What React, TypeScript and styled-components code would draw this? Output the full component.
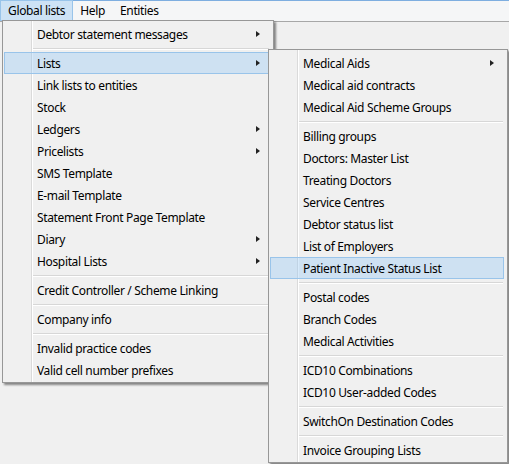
import React from "react";
import styled, { createGlobalStyle } from "styled-components";

type Entry = { label?: string; sub?: boolean; active?: boolean; sep?: boolean };

const SEP: Entry = { sep: true };

const GLOBAL_LISTS: Entry[] = [
  { label: "Debtor statement messages", sub: true },
  SEP,
  { label: "Lists", sub: true, active: true },
  { label: "Link lists to entities" },
  { label: "Stock" },
  { label: "Ledgers", sub: true },
  { label: "Pricelists", sub: true },
  { label: "SMS Template" },
  { label: "E-mail Template" },
  { label: "Statement Front Page Template" },
  { label: "Diary", sub: true },
  { label: "Hospital Lists", sub: true },
  SEP,
  { label: "Credit Controller / Scheme Linking" },
  SEP,
  { label: "Company info" },
  SEP,
  { label: "Invalid practice codes" },
  { label: "Valid cell number prefixes" },
];

const LISTS: Entry[] = [
  { label: "Medical Aids", sub: true },
  { label: "Medical aid contracts" },
  { label: "Medical Aid Scheme Groups" },
  SEP,
  { label: "Billing groups" },
  { label: "Doctors: Master List" },
  { label: "Treating Doctors" },
  { label: "Service Centres" },
  { label: "Debtor status list" },
  { label: "List of Employers" },
  { label: "Patient Inactive Status List", active: true },
  SEP,
  { label: "Postal codes" },
  { label: "Branch Codes" },
  { label: "Medical Activities" },
  SEP,
  { label: "ICD10 Combinations" },
  { label: "ICD10 User-added Codes" },
  SEP,
  { label: "SwitchOn Destination Codes" },
  SEP,
  { label: "Invoice Grouping Lists" },
];

const GlobalStyle = createGlobalStyle`
  html, body {
    margin: 0;
    padding: 0;
    background: #f0f0f0;
  }
  body {
    font-family: "Noto Sans", "Open Sans", sans-serif;
    font-size: 12px;
    letter-spacing: -0.35px;
    color: #000;
  }
`;

const Window = styled.div`
  position: relative;
  width: 509px;
  height: 464px;
  overflow: hidden;
  background: #f0f0f0;
`;

const MenuBar = styled.div`
  display: flex;
  height: 20px;
  border-top: 1px solid #7eaee0;
  border-bottom: 1px solid #a7a7a7;
  background: #f5f6f7;
`;

const BarItem = styled.div<{ $open?: boolean }>`
  display: flex;
  align-items: center;
  padding: 0 7px;
  height: 19px;
  margin-top: -1px;
  border: 1px solid ${({ $open }) => ($open ? "#99c4ea" : "transparent")};
  background: ${({ $open }) => ($open ? "#cde2f5" : "transparent")};
  margin-left: ${({ $open }) => ($open ? "0" : "-1px")};
`;

const Dropdown = styled.div<{ $left: number; $top: number; $width: number }>`
  position: absolute;
  left: ${({ $left }) => $left}px;
  top: ${({ $top }) => $top}px;
  width: ${({ $width }) => $width}px;
  box-sizing: border-box;
  padding: 2px 0 1px;
  border: 1px solid #979797;
  background:
    linear-gradient(to right, transparent 28px, #dadada 28px, #dadada 29px, #fff 29px, #fff 30px, transparent 30px),
    #f0f0f0;
  box-shadow: 2px 2px 2px rgba(0, 0, 0, 0.45);
`;

const Item = styled.div<{ $active?: boolean }>`
  position: relative;
  display: flex;
  align-items: center;
  box-sizing: border-box;
  height: 22px;
  margin: 0 3px 0 1px;
  padding-left: 32px;
  white-space: nowrap;
  border: 1px solid ${({ $active }) => ($active ? "#99c4ea" : "transparent")};
  background: ${({ $active }) => ($active ? "rgba(150, 200, 245, 0.38)" : "transparent")};
`;

const Arrow = styled.span`
  position: absolute;
  right: 9px;
  top: 7px;
  width: 0;
  height: 0;
  border-top: 3.5px solid transparent;
  border-bottom: 3.5px solid transparent;
  border-left: 4px solid #222;
`;

const Separator = styled.div`
  height: 7px;
  display: flex;
  align-items: center;
  padding-left: 30px;
  margin-right: 4px;

  &::after {
    content: "";
    flex: 1;
    height: 1px;
    background: #d7d7d7;
    box-shadow: 0 1px 0 #fff;
  }
`;

const Menu = ({ entries, left, top, width }: { entries: Entry[]; left: number; top: number; width: number }) => (
  <Dropdown $left={left} $top={top} $width={width}>
    {entries.map((e, i) =>
      e.sep ? (
        <Separator key={i} />
      ) : (
        <Item key={i} $active={e.active}>
          {e.label}
          {e.sub && <Arrow />}
        </Item>
      )
    )}
  </Dropdown>
);

const App = () => {
  return (
    <Window>
      <GlobalStyle />
      <MenuBar>
        <BarItem $open>Global lists</BarItem>
        <BarItem>Help</BarItem>
        <BarItem>Entities</BarItem>
      </MenuBar>
      <Menu entries={GLOBAL_LISTS} left={2} top={20} width={272} />
      <Menu entries={LISTS} left={268} top={49} width={240} />
    </Window>
  );
};

export default App;
